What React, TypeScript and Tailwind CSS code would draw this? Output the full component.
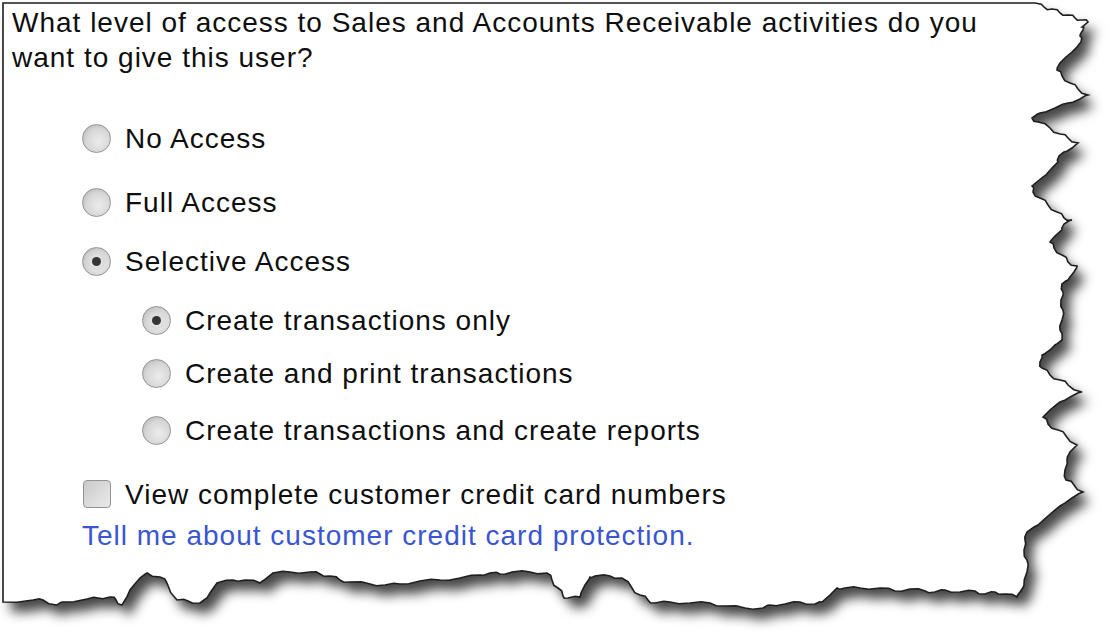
import React from "react";

const rightEdge: [number, number][] = [
  [1035, 3], [1045, 8], [1052, 9], [1060, 13], [1068, 15], [1075, 18], [1082, 20], [1088, 22],
  [1082, 27], [1083, 30], [1080, 36], [1081, 42], [1078, 46], [1072, 52], [1066, 57], [1060, 63],
  [1057, 70], [1062, 76], [1070, 83], [1078, 89], [1088, 95], [1080, 99], [1068, 103], [1055, 108],
  [1040, 113], [1032, 118], [1038, 122], [1050, 128], [1060, 134], [1068, 138], [1078, 143],
  [1072, 148], [1064, 152], [1059, 156], [1058, 162], [1052, 168], [1046, 175], [1038, 181],
  [1032, 186], [1033, 192], [1040, 198], [1048, 205], [1057, 212], [1064, 218], [1072, 220],
  [1064, 224], [1062, 230], [1055, 236], [1050, 242], [1054, 248], [1062, 255], [1068, 262],
  [1077, 266], [1074, 272], [1068, 280], [1062, 284], [1063, 292], [1061, 300], [1063, 310],
  [1062, 320], [1060, 330], [1062, 340], [1055, 345], [1050, 350], [1042, 355], [1040, 362],
  [1042, 368], [1050, 375], [1060, 380], [1068, 385], [1082, 392], [1072, 396], [1060, 402],
  [1050, 410], [1043, 417], [1048, 424], [1058, 430], [1066, 436], [1077, 445], [1070, 452],
  [1067, 460], [1065, 470], [1066, 480], [1074, 485], [1083, 492], [1072, 498], [1060, 506],
  [1048, 516], [1038, 525], [1027, 532], [1025, 540], [1024, 550], [1027, 560], [1027, 572],
  [1024, 585], [1020, 592], [1017, 597],
];

const bottomEdge: [number, number][] = [
  [1005, 594], [995, 592], [985, 594], [975, 591], [960, 592], [945, 590], [935, 592], [925, 591],
  [910, 589], [895, 591], [880, 588], [860, 588], [845, 588], [837, 588], [830, 595], [822, 602],
  [815, 604], [800, 602], [785, 604], [770, 605], [763, 608], [745, 608], [725, 606], [710, 603],
  [690, 603], [670, 602], [655, 603], [648, 600], [640, 595], [632, 588], [622, 578], [610, 576],
  [595, 576], [590, 577], [585, 585], [580, 597], [568, 598], [563, 596], [558, 588], [552, 580],
  [547, 573], [530, 572], [512, 572], [500, 574], [490, 573], [480, 575], [460, 578], [440, 580],
  [420, 581], [400, 584], [385, 585], [370, 584], [350, 582], [340, 580], [330, 576], [320, 574],
  [310, 572], [290, 572], [273, 573], [260, 583], [245, 580], [233, 580], [217, 583], [207, 598],
  [200, 603], [188, 601], [177, 600], [167, 583], [160, 577], [147, 573], [140, 578], [130, 590],
  [122, 605], [116, 600], [110, 597], [98, 598], [87, 599], [63, 602], [57, 605], [43, 600],
  [33, 600], [3, 602],
];

function jag(pts: [number, number][]): string {
  const out: string[] = [];
  for (let i = 0; i < pts.length; i++) {
    const [x, y] = pts[i];
    out.push(`${x},${y}`);
    if (i < pts.length - 1) {
      const [nx, ny] = pts[i + 1];
      const mx = (x + nx) / 2;
      const my = (y + ny) / 2;
      const off = i % 2 === 0 ? 1.2 : -1.2;
      out.push(`${(mx + off).toFixed(1)},${(my - off).toFixed(1)}`);
    }
  }
  return out.join(" ");
}

const points = "3,3 " + jag([...rightEdge, ...bottomEdge]);

function Radio({ checked = false }: { checked?: boolean }) {
  return (
    <span className="flex h-[29px] w-[29px] shrink-0 items-center justify-center rounded-full border border-[#949494] bg-[radial-gradient(circle_at_58%_60%,#ececec_0%,#d6d6d6_55%,#ababab_100%)]">
      {checked && (
        <span className="flex h-[17px] w-[17px] items-center justify-center rounded-full bg-[radial-gradient(circle,#eeeeee_0%,#cfcfcf_100%)]">
          <span className="h-[9px] w-[9px] rounded-full bg-[#353535]" />
        </span>
      )}
    </span>
  );
}

export default function App() {
  return (
    <div
      className="relative h-[641px] w-[1110px] overflow-hidden bg-white text-[#0e0e0e]"
      style={{ fontFamily: '"Liberation Sans", Arial, sans-serif' }}
    >
      <svg className="absolute inset-0" width="1110" height="641" viewBox="0 0 1110 641">
        <defs>
          <filter id="sh" x="-5%" y="-5%" width="115%" height="120%">
            <feDropShadow dx="8" dy="10" stdDeviation="6" floodColor="#000" floodOpacity="0.72" />
          </filter>
        </defs>
        <polygon points={points} fill="#fff" filter="url(#sh)" />
        <polygon points={points} fill="#fff" stroke="#1e1e1e" strokeWidth="1.6" strokeLinejoin="miter" />
      </svg>

      <div className="relative flex flex-col pl-[12px] pt-[5px] text-[28px] leading-[35px] tracking-[1px]">
        <p className="w-[990px]">
          What level of access to Sales and Accounts Receivable activities do you
          <br />
          want to give this user?
        </p>

        <div className="mt-[48px] flex h-[30px] items-center gap-[14px] pl-[70px]">
          <Radio />
          <span>No Access</span>
        </div>
        <div className="mt-[34px] flex h-[30px] items-center gap-[14px] pl-[70px]">
          <Radio />
          <span>Full Access</span>
        </div>
        <div className="mt-[29px] flex h-[30px] items-center gap-[14px] pl-[70px]">
          <Radio checked />
          <span>Selective Access</span>
        </div>
        <div className="mt-[29px] flex h-[30px] items-center gap-[14px] pl-[130px]">
          <Radio checked />
          <span>Create transactions only</span>
        </div>
        <div className="mt-[23px] flex h-[30px] items-center gap-[14px] pl-[130px]">
          <Radio />
          <span>Create and print transactions</span>
        </div>
        <div className="mt-[27px] flex h-[30px] items-center gap-[14px] pl-[130px]">
          <Radio />
          <span>Create transactions and create reports</span>
        </div>
        <div className="mt-[34px] flex h-[30px] items-center gap-[14px] pl-[71px]">
          <span className="h-[28px] w-[28px] shrink-0 rounded-[4px] border border-[#949494] bg-[linear-gradient(135deg,#c8c8c8_0%,#dedede_60%,#e8e8e8_100%)]" />
          <span>View complete customer credit card numbers</span>
        </div>
        <div className="mt-[11px] flex h-[30px] items-center pl-[70px] text-[#3a55d2]">
          Tell me about customer credit card protection.
        </div>
      </div>
    </div>
  );
}
